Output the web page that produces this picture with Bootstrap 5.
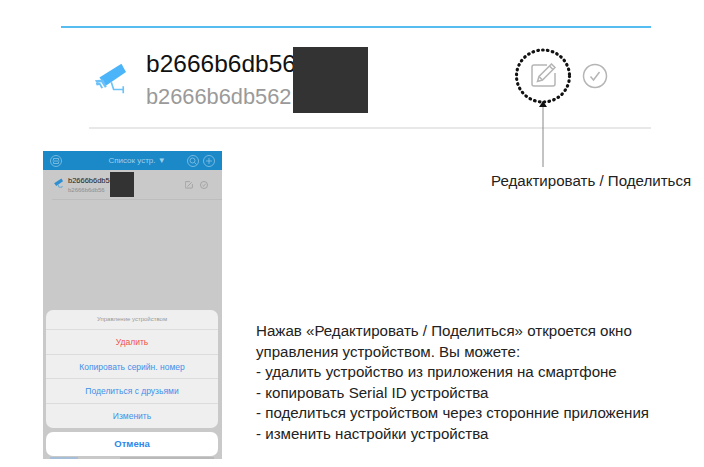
<!DOCTYPE html>
<html lang="ru">
<head>
<meta charset="utf-8">
<title>Редактировать / Поделиться</title>
<link rel="stylesheet" href="https://cdn.jsdelivr.net/npm/bootstrap@5.3.0/dist/css/bootstrap.min.css">
<style>
html,body{background:#fff;margin:0;height:467px;overflow:hidden}
body{font-family:"Liberation Sans",Arial,sans-serif;color:#222;position:relative}
.sheet{width:704px;height:467px;padding-top:26px}
.hero{margin-left:61px;width:590px;border-top:2px solid #55bdf0}
.hero-row{margin-left:28px;height:101px;border-bottom:2px solid #e8e8e8;padding-left:4px}
.cam-big{width:33px;height:33px;flex:none;margin-top:2px;margin-right:3px}
.hero-text{margin-left:17px;margin-top:1px;position:relative;width:385px;padding-top:3px;flex:none}
.hero-name{font-size:24.5px;line-height:30px;color:#111;white-space:nowrap}
.hero-sub{font-size:21.8px;line-height:27px;color:#9a9a9a;margin-top:4px;white-space:nowrap}
.mask-big{position:absolute;left:147px;top:1px;width:75px;height:66px;background:#333;z-index:2}
.hero-icons{gap:25px;margin-top:-3px}
.lower{height:312px;margin-top:22px;padding-left:43px}
.phone{width:179px;height:308px;background:#c9c9c9;position:relative;overflow:hidden;flex:none}
.phone-bar{height:19px;background:#1b88c8;color:#9fd0ea;font-size:8px;padding:0 7px}
.phone-title{flex:1;text-align:center;padding-left:25px}
.phone-row{height:30px;margin-left:9px;border-bottom:1px solid #bdbdbd;position:relative}
.phone-cam{position:absolute;top:8px;left:0}
.phone-name{font-size:7.5px;line-height:9px;color:#222;padding-top:6px;margin-left:16px}
.phone-sub{font-size:6px;line-height:9px;color:#8d8d8d;margin-left:16px;margin-top:1px}
.mask-small{position:absolute;left:58px;top:2px;width:24px;height:25px;background:#333}
.phone-icons{position:absolute;right:14px;top:11px;gap:7px}
.sheet-menu{position:absolute;left:3px;width:172px;top:159px;background:#efefef;border-radius:7px;text-align:center;font-size:8.5px;color:#3f90ea}
.sheet-head{height:19px;line-height:19px;font-size:6px;color:#999}
.sheet-item{height:24.7px;line-height:24px;border-top:1px solid #dcdcdc}
.sheet-del{color:#ef5147}
.sheet-cancel{position:absolute;left:3px;width:172px;top:281px;height:24px;line-height:24px;background:#fff;border-radius:7px;text-align:center;font-size:9.5px;font-weight:700;color:#2f88ea}
.phone-foot{position:absolute;left:7px;right:8px;top:306px;height:2px;gap:22px}
.foot-a{width:28px;background:#a5bfd9}
.foot-b{flex:1;margin-left:20px;background:#b9b9b9}
.side{flex:1;padding-left:34px}
.cap{font-size:15.1px;line-height:17px;color:#222;margin-left:235px;margin-top:21px;white-space:nowrap}
.desc{font-size:15.1px;line-height:20.6px;color:#222;margin-top:132px;white-space:nowrap}
.ring{position:absolute;left:0;top:0;pointer-events:none}
</style>
</head>
<body>
<div class="sheet">
  <div class="hero">
    <div class="hero-row d-flex align-items-center">
      <svg class="cam-big" viewBox="0 0 36 36">
        <path d="M7 17 31 2l5 9-22 15z" fill="#4cb4f8"/>
        <path d="M2 20l9-1 4 8-2 1-4-6-5 1zM3 23l5 0 3 5-2 1-2-4-3 .5z" fill="#6cc2f8"/>
        <path d="M20 22l2.500 8H33M33 26.500V34" fill="none" stroke="#6cc2f8" stroke-width="1.800"/>
      </svg>
      <div class="hero-text">
        <div class="hero-name">b2666b6db56</div>
        <div class="hero-sub">b2666b6db562</div>
        <div class="mask-big"></div>
      </div>
      <div class="hero-icons d-flex align-items-center">
        <svg width="26" height="26" viewBox="0 0 26 26" fill="none" stroke="#b5b5b5" stroke-width="1.500">
          <path d="M24 10V21a2 2 0 0 1-2 2H3a2 2 0 0 1-2-2V4a2 2 0 0 1 2-2H16"/>
          <path d="M6.500 18.500l1.500-5L20.500 1 24 4.500 11.500 17z"/>
          <path d="M18.500 3l3.500 3.500M8 13.500l3.500 3.500"/>
        </svg>
        <svg width="26" height="26" viewBox="0 0 26 26" fill="none" stroke="#b5b5b5" stroke-width="1.500">
          <circle cx="13" cy="13" r="11.500"/>
          <path d="M8.500 13.500l3 3.500L17.500 9"/>
        </svg>
      </div>
    </div>
  </div>
  <div class="lower d-flex">
    <div class="phone">
      <div class="phone-bar d-flex align-items-center">
        <svg width="12" height="12" viewBox="0 0 12 12" fill="none" stroke="#8cc5e5" stroke-width=".8">
          <circle cx="6" cy="6" r="5.500"/><path d="M3.500 5V3.500H8.500V5M3.500 7V8.500H8.500V7M2.500 6H9.500"/>
        </svg>
        <span class="phone-title">Список устр. ▼</span>
        <svg width="12" height="12" viewBox="0 0 12 12" fill="none" stroke="#8cc5e5" stroke-width=".8">
          <circle cx="6" cy="6" r="5.500"/><circle cx="5.500" cy="5.500" r="2.500"/><path d="M7.500 7.500 9.500 9.500"/>
        </svg>
        <svg class="ms-1" width="12" height="12" viewBox="0 0 12 12" fill="none" stroke="#8cc5e5" stroke-width=".8">
          <circle cx="6" cy="6" r="5.500"/><path d="M6 3V9M3 6H9"/>
        </svg>
      </div>
      <div class="phone-row">
        <svg class="phone-cam" width="11" height="11" viewBox="0 0 36 36">
          <path d="M7 17 31 2l5 9-22 15z" fill="#2f8fd0"/>
          <path d="M20 22l2.500 8H33V26" fill="none" stroke="#5aa6d8" stroke-width="3"/>
        </svg>
        <div class="phone-name">b2666b6db5</div>
        <div class="phone-sub">b2666b6db56</div>
        <div class="mask-small"></div>
        <div class="phone-icons d-flex">
          <svg width="8" height="8" viewBox="0 0 26 26" fill="none" stroke="#999" stroke-width="2.500"><path d="M24 10V21a2 2 0 0 1-2 2H3a2 2 0 0 1-2-2V4a2 2 0 0 1 2-2H16"/><path d="M8 18 22 4"/></svg>
          <svg width="8" height="8" viewBox="0 0 26 26" fill="none" stroke="#999" stroke-width="2.500"><circle cx="13" cy="13" r="11.500"/><path d="M8 13l4 4 6-8"/></svg>
        </div>
      </div>
      <div class="sheet-menu">
        <div class="sheet-head">Управление устройством</div>
        <div class="sheet-item sheet-del">Удалить</div>
        <div class="sheet-item">Копировать серийн. номер</div>
        <div class="sheet-item">Поделиться с друзьями</div>
        <div class="sheet-item">Изменить</div>
      </div>
      <div class="sheet-cancel">Отмена</div>
      <div class="phone-foot d-flex"><span class="foot-a"></span><span class="foot-b"></span></div>
    </div>
    <div class="side">
      <div class="cap">Редактировать / Поделиться</div>
      <div class="desc">Нажав «Редактировать / Поделиться» откроется окно<br>управления устройством. Вы можете:<br>- удалить устройство из приложения на смартфоне<br>- копировать Serial ID устройства<br>- поделиться устройством через сторонние приложения<br>- изменить настройки устройства</div>
    </div>
  </div>
</div>
<svg class="ring" width="704" height="467" viewBox="0 0 704 467">
  <ellipse cx="543" cy="76" rx="26.500" ry="26" fill="none" stroke="#111" stroke-width="3.200" stroke-dasharray="0.600 4.300" stroke-linecap="round"/>
  <path d="M543 106V167" stroke="#888" stroke-width="1"/>
  <path d="M543 101l-4 6h8z" fill="#111"/>
</svg>
</body>
</html>
